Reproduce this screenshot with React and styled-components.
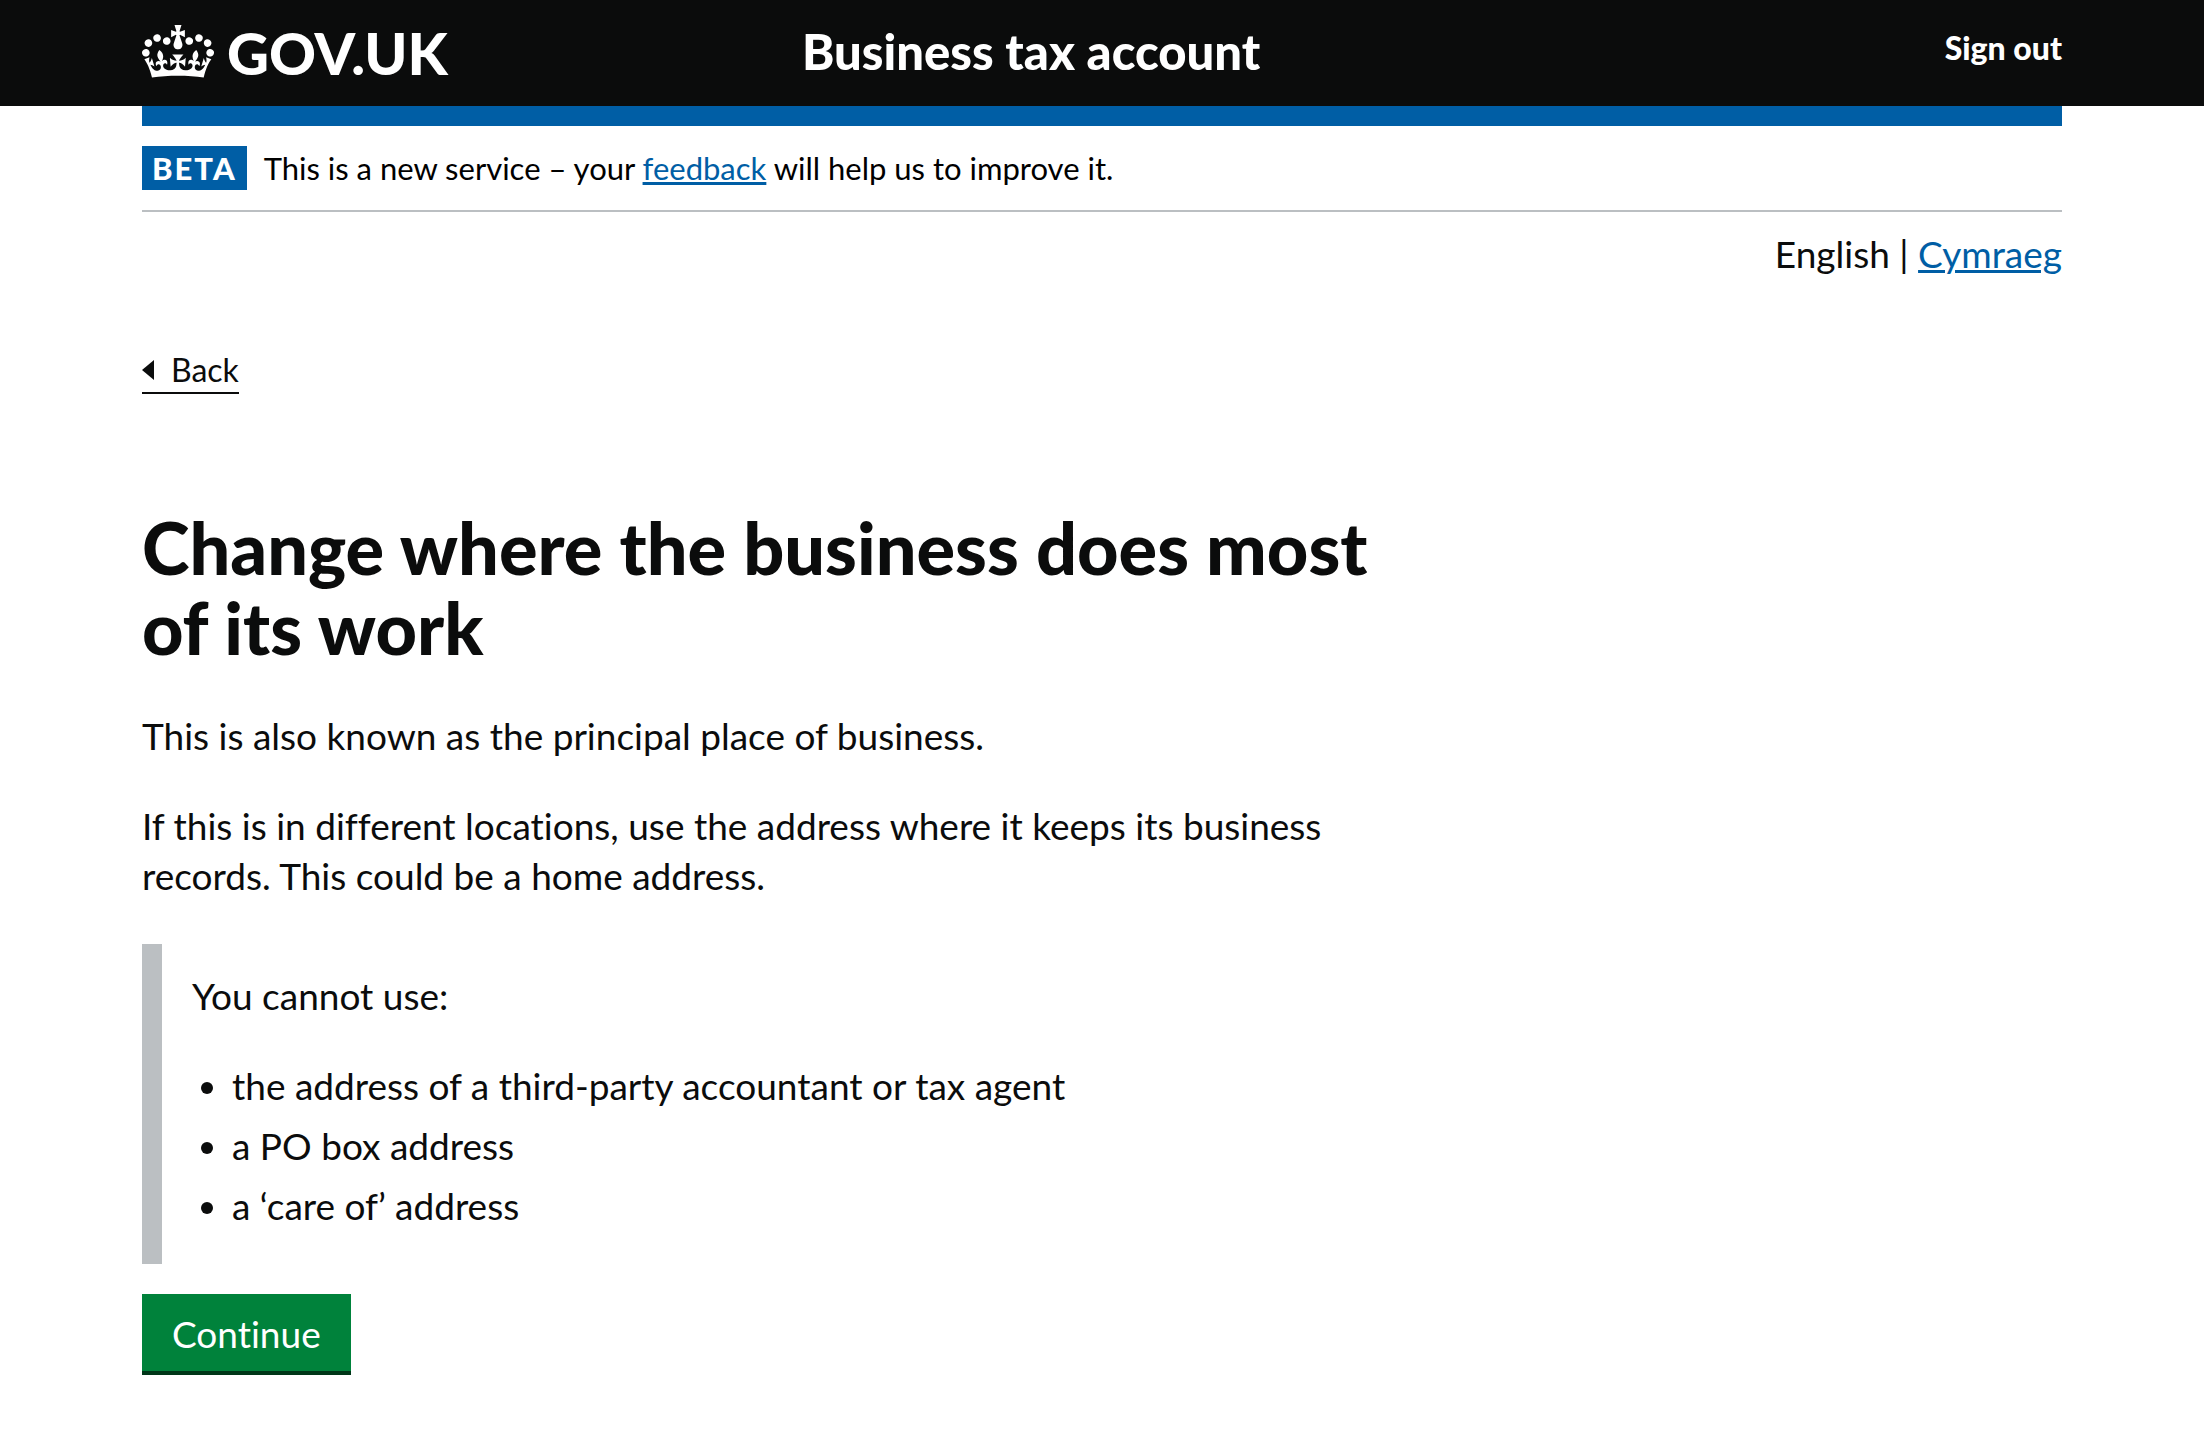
import React from 'react';
import styled, { createGlobalStyle, css } from 'styled-components';

const colours = {
  black: '#0b0c0c',
  blue: '#005ea5',
  grey: '#bbbfc2',
  green: '#00823b',
  greenShadow: '#003618',
  white: '#ffffff',
};

const GlobalStyle = createGlobalStyle`
  *, *::before, *::after { box-sizing: border-box; }
  body {
    margin: 0;
    background: ${colours.white};
    color: ${colours.black};
    font-family: Lato, "Noto Sans", sans-serif;
    font-size: 37px;
    line-height: 50px;
    font-variant-ligatures: none;
  }
`;

const container = css`
  max-width: 1920px;
  margin: 0 auto;
`;

const Page = styled.div`
  padding-bottom: 72px;
`;

const Header = styled.header`
  background: ${colours.black};
  color: ${colours.white};
  padding: 0 60px;
`;

const HeaderInner = styled.div`
  ${container}
  display: grid;
  grid-template-columns: 660px 1fr auto;
  align-items: center;
  height: 106px;
`;

const LogoLink = styled.a`
  display: flex;
  align-items: center;
  gap: 13px;
  color: inherit;
  text-decoration: none;
`;

const Crown = styled.svg`
  width: 72px;
  height: 53px;
  margin-bottom: 4px;
  fill: currentColor;
`;

const LogoText = styled.span`
  font-size: 58px;
  line-height: 64px;
  font-weight: 900;
`;

const ServiceName = styled.a`
  color: inherit;
  font-size: 49px;
  line-height: 60px;
  font-weight: 900;
  text-decoration: none;
  padding-bottom: 4px;
`;

const SignOut = styled.a`
  color: inherit;
  font-size: 32px;
  line-height: 40px;
  font-weight: 900;
  text-decoration: none;
  padding-bottom: 10px;
`;

const Body = styled.div`
  padding: 0 60px;
`;

const Container = styled.div`
  ${container}
`;

const ServiceBar = styled.div`
  height: 20px;
  background: ${colours.blue};
`;

const PhaseBanner = styled.div`
  display: flex;
  align-items: center;
  gap: 17px;
  padding: 20px 0;
  border-bottom: 2px solid ${colours.grey};
  color: #000000;
  font-size: 31px;
  line-height: 44px;
`;

const PhaseTag = styled.strong`
  padding: 0 10px;
  background: ${colours.blue};
  color: ${colours.white};
  font-weight: 900;
  letter-spacing: 2px;
`;

const Link = styled.a`
  color: ${colours.blue};
  text-decoration: underline;
  text-decoration-thickness: 3px;
`;

const LanguageNav = styled.nav`
  padding-top: 17px;
  text-align: right;
`;

const BackLink = styled.a`
  display: inline-flex;
  align-items: center;
  gap: 17px;
  margin-top: 69px;
  border-bottom: 2px solid ${colours.black};
  color: ${colours.black};
  font-size: 32px;
  line-height: 44px;
  text-decoration: none;
`;

const BackArrow = styled.svg`
  width: 12px;
  height: 20px;
  fill: currentColor;
`;

const Main = styled.main`
  max-width: 1260px;
  padding-top: 113px;
`;

const Heading = styled.h1`
  margin: 0 0 44px;
  font-size: 72px;
  line-height: 80px;
  font-weight: 900;
`;

const Paragraph = styled.p`
  margin: 0 0 40px;
`;

const Inset = styled.section`
  margin: 43px 0 30px;
  border-left: 20px solid ${colours.grey};
  padding: 27px 30px 33px;
`;

const BulletList = styled.ul`
  display: grid;
  gap: 10px;
  margin: 0;
  padding: 0 0 0 40px;
`;

const Button = styled.button`
  display: block;
  border: 0;
  padding: 15px 30px 12px;
  background: ${colours.green};
  box-shadow: 0 4px 0 ${colours.greenShadow};
  color: ${colours.white};
  font: inherit;
  font-variant-ligatures: none;
`;

const restrictions = [
  'the address of a third-party accountant or tax agent',
  'a PO box address',
  'a ‘care of’ address',
];

const crownPath =
  'M25 30.2c3.5 1.5 7.7-.2 9.1-3.7 1.5-3.6-.2-7.8-3.9-9.2-3.6-1.4-7.6.3-9.1 3.9-1.4 3.5.3 7.5 3.9 9zM9 39.5c3.6 1.5 7.8-.2 9.2-3.7 1.5-3.6-.2-7.8-3.9-9.1-3.6-1.5-7.6.2-9.1 3.8-1.4 3.5.3 7.5 3.8 9zM4.4 57.2c3.5 1.5 7.7-.2 9.1-3.8 1.5-3.6-.2-7.7-3.9-9.1-3.5-1.5-7.6.3-9.1 3.8-1.4 3.5.3 7.6 3.9 9.1zm38.3-21.4c3.5 1.5 7.7-.2 9.1-3.8 1.5-3.6-.2-7.7-3.9-9.1-3.6-1.5-7.6.3-9.1 3.8-1.3 3.6.4 7.7 3.9 9.1zm64.4-5.6c-3.6 1.5-7.8-.2-9.1-3.7-1.5-3.6.2-7.8 3.8-9.2 3.6-1.4 7.7.3 9.2 3.9 1.3 3.5-.4 7.5-3.9 9zm15.9 9.3c-3.6 1.5-7.7-.2-9.1-3.7-1.5-3.6.2-7.8 3.7-9.1 3.6-1.5 7.7.2 9.2 3.8 1.5 3.5-.3 7.5-3.8 9zm4.7 17.7c-3.6 1.5-7.8-.2-9.2-3.8-1.5-3.6.2-7.7 3.9-9.1 3.6-1.5 7.7.3 9.2 3.8 1.3 3.5-.4 7.6-3.9 9.1zM89.3 35.8c-3.6 1.5-7.8-.2-9.2-3.8-1.4-3.6.2-7.7 3.9-9.1 3.6-1.5 7.7.3 9.2 3.8 1.4 3.6-.3 7.7-3.9 9.1zM69.7 17.7l8.9 4.7V9.3l-8.9 2.8c-.2-.3-.5-.6-.9-.9L72.4 0H59.6l3.5 11.2c-.3.3-.6.5-.9.9l-8.8-2.8v13.1l8.8-4.7c.3.3.6.7.9.9l-5 15.4v.1c-.2.8-.4 1.6-.4 2.4 0 4.1 3.1 7.5 7 8.1h.2c.3 0 .7.1 1 .1.4 0 .7 0 1-.1h.2c4-.6 7.1-4.1 7.1-8.1 0-.8-.1-1.7-.4-2.4V34l-5.1-15.4c.4-.2.7-.6 1-.9zM66 92.8c16.9 0 32.8 1.1 47.1 3.2 4-16.9 8.9-26.7 14-33.5l-9.6-3.4c1 4.9 1.1 7.2 0 10.2-1.5-1.4-3-4.3-4.2-8.7L108.6 76c2.8-2 5-3.2 7.5-3.3-4.4 9.4-10 11.9-13.6 11.2-4.3-.8-6.3-4.6-5.6-7.9 1-4.7 5.7-5.9 8-.5 4.3-8.7-3-11.4-7.6-8.8 7.1-7.2 7.9-13.5 2.1-21.1-8 6.1-8.1 12.3-4.5 20.8-4.7-5.4-12.1-2.5-9.5 6.2 3.4-5.2 7.9-2 7.2 3.1-.6 4.3-6.4 7.8-13.5 7.2-10.3-.9-10.9-8-11.2-13.8 2.5-.5 7.1 1.8 11 7.3L80.2 60c-4.1 4.4-8 5.3-12.3 5.4 1.4-4.4 8-11.6 8-11.6H55.5s6.4 7.2 7.9 11.6c-4.2-.1-8-1-12.3-5.4l1.4 16.4c3.9-5.5 8.5-7.7 10.9-7.3-.3 5.8-.9 12.8-11.1 13.8-7.2.6-12.9-2.9-13.5-7.2-.7-5 3.8-8.3 7.1-3.1 2.7-8.7-4.6-11.6-9.4-6.2 3.7-8.5 3.6-14.7-4.6-20.8-5.8 7.6-5 13.9 2.2 21.1-4.7-2.6-11.9.1-7.7 8.8 2.3-5.5 7.1-4.2 8.1.5.7 3.3-1.3 7.1-5.7 7.9-3.5.7-9-1.8-13.5-11.2 2.5.1 4.7 1.3 7.5 3.3l-4.7-15.4c-1.2 4.4-2.7 7.2-4.3 8.7-1.1-3-.9-5.3 0-10.2l-9.5 3.4c5 6.9 9.9 16.7 14 33.5 14.8-2.1 30.8-3.2 47.7-3.2z';

export default function App() {
  return (
    <Page>
      <GlobalStyle />
      <Header>
        <HeaderInner>
          <LogoLink href="#home">
            <Crown viewBox="0 0 132 97" aria-hidden="true">
              <path fillRule="evenodd" d={crownPath} />
            </Crown>
            <LogoText>GOV.UK</LogoText>
          </LogoLink>
          <ServiceName href="#account">Business tax account</ServiceName>
          <SignOut href="#sign-out">Sign out</SignOut>
        </HeaderInner>
      </Header>
      <Body>
        <Container>
          <ServiceBar />
          <PhaseBanner>
            <PhaseTag>BETA</PhaseTag>
            <span>
              This is a new service – your <Link href="#feedback">feedback</Link> will help us to improve it.
            </span>
          </PhaseBanner>
          <LanguageNav>
            English | <Link href="#cymraeg" lang="cy">Cymraeg</Link>
          </LanguageNav>
          <BackLink href="#back">
            <BackArrow viewBox="0 0 12 20" aria-hidden="true">
              <path d="M12 0v20L0 10z" />
            </BackArrow>
            Back
          </BackLink>
          <Main>
            <Heading>Change where the business does most of its work</Heading>
            <Paragraph>This is also known as the principal place of business.</Paragraph>
            <Paragraph>
              If this is in different locations, use the address where it keeps its business records. This
              could be a home address.
            </Paragraph>
            <Inset>
              <Paragraph>You cannot use:</Paragraph>
              <BulletList>
                {restrictions.map((text) => (
                  <li key={text}>{text}</li>
                ))}
              </BulletList>
            </Inset>
            <Button type="button">Continue</Button>
          </Main>
        </Container>
      </Body>
    </Page>
  );
}
